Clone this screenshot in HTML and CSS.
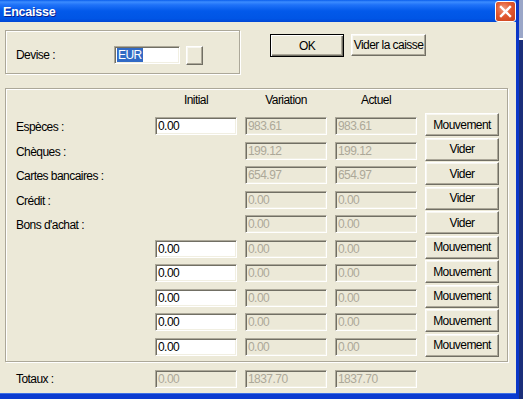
FILE: index.html
```html
<!DOCTYPE html>
<html lang="fr">
<head>
    <meta charset="UTF-8">
    <title>Encaisse</title>
    <link rel="stylesheet" href="styles.css">
</head>
<body>

    <div class="window">
        <!-- Title bar -->
        <div class="titlebar">
            <span class="title">Encaisse</span>
            <div class="close-btn">
                <svg width="13" height="13" viewBox="0 0 13 13">
                    <path d="M2 2 L11 11 M11 2 L2 11" stroke="#fff" stroke-width="2.4" stroke-linecap="square"/>
                </svg>
            </div>
        </div>

        <div class="client">
            <!-- Devise + actions -->
            <div class="top-row">
                <div class="group devise-box">
                    <span class="label devise-label">Devise :</span>
                    <div class="field edit devise-field"><span class="selected">EUR</span></div>
                    <div class="btn small-btn"></div>
                </div>
                <div class="btn default-btn ok-btn">OK</div>
                <div class="btn vider-caisse">Vider la caisse</div>
            </div>

            <!-- Payment grid -->
            <div class="group grid-box">
                <div class="grid">
                    <span></span>
                    <span class="head">Initial</span>
                    <span class="head">Variation</span>
                    <span class="head">Actuel</span>
                    <span></span>

                    <span class="label">Espèces :</span>
                    <div class="field edit">0.00</div>
                    <div class="field disabled">983.61</div>
                    <div class="field disabled">983.61</div>
                    <div class="btn row-btn">Mouvement</div>

                    <span class="label">Chèques :</span>
                    <span></span>
                    <div class="field disabled">199.12</div>
                    <div class="field disabled">199.12</div>
                    <div class="btn row-btn">Vider</div>

                    <span class="label">Cartes bancaires :</span>
                    <span></span>
                    <div class="field disabled">654.97</div>
                    <div class="field disabled">654.97</div>
                    <div class="btn row-btn">Vider</div>

                    <span class="label">Crédit :</span>
                    <span></span>
                    <div class="field disabled">0.00</div>
                    <div class="field disabled">0.00</div>
                    <div class="btn row-btn">Vider</div>

                    <span class="label">Bons d'achat :</span>
                    <span></span>
                    <div class="field disabled">0.00</div>
                    <div class="field disabled">0.00</div>
                    <div class="btn row-btn">Vider</div>

                    <span></span>
                    <div class="field edit">0.00</div>
                    <div class="field disabled">0.00</div>
                    <div class="field disabled">0.00</div>
                    <div class="btn row-btn">Mouvement</div>

                    <span></span>
                    <div class="field edit">0.00</div>
                    <div class="field disabled">0.00</div>
                    <div class="field disabled">0.00</div>
                    <div class="btn row-btn">Mouvement</div>

                    <span></span>
                    <div class="field edit">0.00</div>
                    <div class="field disabled">0.00</div>
                    <div class="field disabled">0.00</div>
                    <div class="btn row-btn">Mouvement</div>

                    <span></span>
                    <div class="field edit">0.00</div>
                    <div class="field disabled">0.00</div>
                    <div class="field disabled">0.00</div>
                    <div class="btn row-btn">Mouvement</div>

                    <span></span>
                    <div class="field edit">0.00</div>
                    <div class="field disabled">0.00</div>
                    <div class="field disabled">0.00</div>
                    <div class="btn row-btn">Mouvement</div>
                </div>
            </div>

            <!-- Totals -->
            <div class="totals">
                <span class="label">Totaux :</span>
                <div class="field disabled">0.00</div>
                <div class="field disabled">1837.70</div>
                <div class="field disabled">1837.70</div>
            </div>
        </div>
    </div>

    <div class="behind"></div>

</body>
</html>
```

FILE: styles.css
```css
* {
    margin: 0;
    padding: 0;
    box-sizing: border-box;
    font-family: "Liberation Sans", Arial, sans-serif;
}

body {
    display: flex;
    width: 523px;
    height: 399px;
    overflow: hidden;
    background: #1D3584;
}

.window {
    width: 519px;
    height: 399px;
    display: flex;
    flex-direction: column;
    background-color: #ECE9D8;
    border-right: 3px solid #0A36C8;
    border-bottom: 5px solid #0B3BD0;
    box-shadow: inset 0 -1px 0 #3D6FE6;
}

.titlebar {
    height: 22px;
    flex: none;
    display: flex;
    align-items: center;
    justify-content: space-between;
    padding-left: 3px;
    background: linear-gradient(to bottom, #0A5EEC 0%, #3C8CFF 9%, #1F72F8 22%, #0259EA 50%, #0055E5 85%, #0046D4 100%);
}

.title {
    color: white;
    font-weight: bold;
    font-size: 12.5px;
    letter-spacing: -0.2px;
    text-shadow: 1px 1px 0 #0A1E8C;
    margin-top: 1px;
}

.close-btn {
    width: 21px;
    height: 21px;
    margin-top: 1px;
    border: 1px solid #fff;
    border-radius: 3px;
    background: radial-gradient(circle at 40% 35%, #F09A7E 0%, #E2582F 45%, #C7401A 100%);
    display: flex;
    align-items: center;
    justify-content: center;
}

.client {
    flex: 1;
    padding: 8px 0 0 5px;
    font-size: 12px;
    letter-spacing: -0.55px;
    line-height: 14px;
}

.label {
    color: #000;
    white-space: nowrap;
}

/* Group boxes */
.group {
    border: 1px solid #ACA899;
    box-shadow: inset 1px 1px 0 #fff, 1px 1px 0 #fff;
}

.top-row {
    display: flex;
    align-items: flex-start;
}

.devise-box {
    width: 235px;
    height: 44px;
    display: flex;
    align-items: center;
    padding: 6px 0 0 10px;
}

.devise-label {
    width: 98px;
}

.devise-field {
    width: 66px;
    height: 16px;
    padding-top: 0;
}

.selected {
    background: #316AC5;
    color: white;
    padding: 0 1px;
}

.small-btn {
    width: 17px;
    height: 19px;
    margin-left: 6px;
    border: 1px solid #3A3A36;
}

/* Fields */
.field {
    height: 18px;
    padding: 1px 0 0 2px;
    border: 1px solid;
    border-color: #ACA899 #fff #fff #ACA899;
    box-shadow: inset 1px 1px 0 #716F64, inset -1px -1px 0 #F1EFE2;
    white-space: nowrap;
    overflow: hidden;
}

.edit {
    background: #fff;
    color: #000;
}

.disabled {
    background: #ECE9D8;
    color: #ACA899;
}

/* Buttons */
.btn {
    display: flex;
    align-items: center;
    justify-content: center;
    background-color: #ECE9D8;
    color: #000;
    border: 1px solid;
    border-color: #fff #716F64 #716F64 #fff;
    box-shadow: inset -1px -1px 0 #ACA899, inset 1px 1px 0 #F8F7F1;
}

.default-btn {
    border: 1px solid #000;
    box-shadow: inset 1px 1px 0 #fff, inset -1px -1px 0 #716F64, inset -2px -2px 0 #ACA899;
}

.ok-btn {
    width: 74px;
    height: 23px;
    margin: 4px 0 0 30px;
}

.vider-caisse {
    width: 75px;
    height: 22px;
    margin: 4px 0 0 7px;
}

/* Main grid */
.grid-box {
    width: 503px;
    height: 274px;
    margin-top: 14px;
    padding: 0 0 0 10px;
}

.grid {
    display: grid;
    grid-template-columns: 131px 82px 82px 82px 74px;
    grid-template-rows: 24px;
    grid-auto-rows: 24.5px;
    column-gap: 8px;
    align-items: center;
}

.head {
    text-align: center;
    padding-bottom: 2px;
}

.grid .label {
    align-self: start;
    padding-top: 7px;
}

.grid .field {
    align-self: start;
    margin-top: 4px;
}

.row-btn {
    align-self: start;
    height: 23px;
}

/* Totals */
.totals {
    display: grid;
    grid-template-columns: 131px 82px 82px 82px;
    column-gap: 8px;
    align-items: center;
    margin-top: 8px;
    padding-left: 11px;
}

.behind {
    width: 4px;
    height: 399px;
    background: linear-gradient(to bottom, #9AA6C8 0px, #9AA6C8 38px, #FFFFFF 38px, #FFFFFF 40px, #1B2F7A 40px);
}
```
